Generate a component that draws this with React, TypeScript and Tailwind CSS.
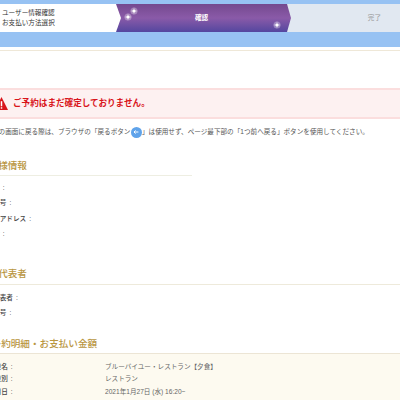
const jp = { fontFamily: '"Liberation Sans", "Noto Sans CJK JP", sans-serif' };

function Sparkle({ className }: { className: string }) {
  return (
    <svg viewBox="0 0 12 12" className={`absolute h-3 w-3 blur-[0.3px] ${className}`}>
      <circle cx="6" cy="6" r="3.5" fill="#fff" opacity="0.3" />
      <path d="M6 2 L6.4 5.6 L10 6 L6.4 6.4 L6 10 L5.6 6.4 L2 6 L5.6 5.6 Z" fill="#fff" opacity="0.8" />
      <circle cx="6" cy="6" r="1.5" fill="#fff" />
    </svg>
  );
}

function Steps() {
  return (
    <div className="bg-[#97c2f3] pt-1 pb-[15px]">
      <div className="flex h-[28px] bg-[#e1e8f1]">
        <div className="relative flex w-[291px] shrink-0 bg-gradient-to-b from-[#74498f] via-[#8a5aa8] to-[#54469f] [clip-path:polygon(0_0,287px_0,291px_50%,287px_100%,0_100%)]">
          <div className="flex h-full w-[121px] shrink-0 flex-col justify-center bg-white pl-[2px] text-[6.6px] leading-[10px] text-[#333] [clip-path:polygon(0_0,116px_0,121px_50%,116px_100%,0_100%)]">
            <span>ユーザー情報確認</span>
            <span>お支払い方法選択</span>
          </div>
          <Sparkle className="left-[128px] top-[1px]" />
          <Sparkle className="left-[122px] top-[7px]" />
          <Sparkle className="left-[271px] top-[15px]" />
          <span className="absolute left-[195px] top-[9px] text-[6.6px] leading-[10px] font-bold text-white">確認</span>
        </div>
        <div className="flex flex-1 items-center justify-end pr-[19px] text-[6.6px] text-[#999]">完了</div>
      </div>
    </div>
  );
}

function Heading({ text, offset, line }: { text: string; offset: string; line: string }) {
  return (
    <div>
      <h2 className={`text-[9.6px] leading-[14px] font-medium text-[#b9963f] ${offset}`}>{text}</h2>
      <div className={line} />
    </div>
  );
}

function Row({ label }: { label: string }) {
  return (
    <p className="-ml-[20px] text-[6.6px] leading-[15.3px] font-medium text-[#444]">
      {label}
      <span className="ml-[3px]">:</span>
    </p>
  );
}

export default function App() {
  return (
    <div className="h-[400px] w-[400px] overflow-hidden bg-white" style={jp}>
      <Steps />
      <div className="mt-[3px] h-px bg-[#efe8d8]" />

      <div className="mt-[37px] flex h-[31px] items-center border-y-2 border-[#fbdede] bg-[#fdf1f1]">
        <svg viewBox="0 0 14 14" className="-ml-[5px] h-[13px] w-[13px] shrink-0">
          <path d="M7 0 L14 14 L0 14 Z" fill="#d9151b" />
          <rect x="6.2" y="4.5" width="1.6" height="5.5" fill="#fff" />
          <rect x="6.2" y="11" width="1.6" height="1.6" fill="#fff" />
        </svg>
        <span className="ml-[5px] text-[8.6px] font-bold text-[#d9151b]">ご予約はまだ確定しておりません。</span>
      </div>

      <p className="-ml-[8px] mt-[7px] flex h-[12px] items-center whitespace-nowrap text-[6.6px] text-[#555]">
        前の画面に戻る際は、ブラウザの「戻るボタン
        <span className="ml-[0.5px] flex h-[11px] w-[11px] shrink-0 items-center justify-center rounded-full bg-[#5fa3ea]">
          <svg viewBox="0 0 10 10" className="h-2 w-2">
            <path d="M8 5 H2.5 M4.5 3 L2.5 5 L4.5 7" fill="none" stroke="#fff" strokeWidth="1.2" />
          </svg>
        </span>
        」は使用せず、ページ最下部の「1つ前へ戻る」ボタンを使用してください。
      </p>

      <div className="mt-[21px]">
        <Heading text="お客様情報" offset="-ml-[21px]" line="mt-[2px] h-px w-[192px] bg-[#eeeee2]" />
      </div>
      <div className="mt-[4px]">
        <Row label="お名前" />
        <Row label="電話番号" />
        <Row label="メールアドレス" />
        <Row label="ご住所" />
      </div>

      <div className="mt-[26px]">
        <Heading text="宿泊代表者" offset="-ml-[21px]" line="mt-[3px] h-px bg-[#eeeadb]" />
      </div>
      <div className="mt-[5px]">
        <Row label="宿泊代表者" />
        <Row label="電話番号" />
      </div>

      <div className="mt-[16px]">
        <Heading text="ご予約明細・お支払い金額" offset="-ml-[18px]" line="mt-[2px] h-px bg-[#ece5d5]" />
      </div>
      <div className="h-[60px] bg-[#fdfaf0] pt-[7px] text-[6.6px] leading-[12.5px]">
        {[
          ['施設名', 'ブルーバイユー・レストラン【夕食】'],
          ['施設別', 'レストラン'],
          ['利用日', '2021年1月27日 (水) 16:20~'],
        ].map(([label, value]) => (
          <div key={label} className="flex">
            <span className="-ml-[12px] w-[117px] shrink-0 font-medium text-[#444]">
              {label}
              <span className="ml-[3px]">:</span>
            </span>
            <span className="text-[#666]">{value}</span>
          </div>
        ))}
      </div>
    </div>
  );
}
